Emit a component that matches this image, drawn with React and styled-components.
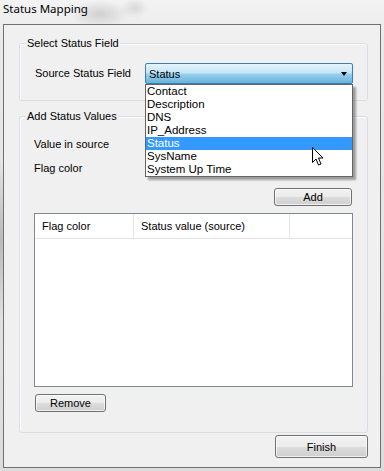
import React from "react";
import styled, { createGlobalStyle } from "styled-components";

const Global = createGlobalStyle`
  html, body { margin: 0; padding: 0; }
  body { background: #e6e6e6; font-family: "Liberation Sans", Arial, sans-serif; }
`;

const Frame = styled.div`
  position: relative;
  width: 384px;
  height: 471px;
  display: flex;
  flex-direction: column;
  box-sizing: border-box;
  background:
    radial-gradient(ellipse 30px 14px at 100px 14px, rgba(150,150,150,0.35), transparent),
    radial-gradient(ellipse 14px 10px at 135px 8px, rgba(160,160,160,0.3), transparent),
    radial-gradient(ellipse 8px 80px at 1px 240px, rgba(120,120,120,0.4), transparent),
    linear-gradient(to bottom, #f3f3f3, #e9e9e9 40px, #dcdcdc);
  overflow: hidden;
`;

const TitleBar = styled.div`
  height: 24px;
  flex: none;
  box-sizing: border-box;
  padding: 1px 0 0 3px;
  font-family: "Segoe UI", "Noto Sans", sans-serif;
  font-size: 11.5px;
  line-height: 16px;
  color: #000;
`;

const Client = styled.div`
  flex: 1;
  margin: 0 3px 3px 3px;
  border: 1px solid #707070;
  background: #f0f0f0;
  display: flex;
  flex-direction: column;
  padding: 18px 12px 0 15px;
  font-size: 11px;
  color: #000;
`;

const Group = styled.div`
  position: relative;
  height: ${(p) => p.$h}px;
  box-sizing: border-box;
  border: 1px solid #d5dfe5;
  border-radius: 3px;
  box-shadow: inset 1px 1px 0 #fff;
  margin-top: ${(p) => p.$mt || 0}px;
  padding: 19px 14px 0 14px;
  display: flex;
  flex-direction: column;
  flex: none;
`;

const Legend = styled.span`
  position: absolute;
  left: 6px;
  top: -8px;
  padding: 0 1px;
  background: #f0f0f0;
  line-height: 14px;
`;

const FieldRow = styled.div`
  display: flex;
  align-items: center;
  height: 21px;
`;

const FieldLabel = styled.span`
  width: 110px;
  padding-left: 1px;
  line-height: 13px;
`;

const Combo = styled.div`
  position: relative;
  width: 208px;
  height: 21px;
  box-sizing: border-box;
  border: 1px solid #3c7fb1;
  border-radius: 2px;
  background: linear-gradient(to bottom, #e5f4fc 0%, #c4e5f6 48%, #98d1ef 52%, #68b3db 100%);
  display: flex;
  align-items: center;
  justify-content: space-between;
  padding: 0 4px 0 3px;
`;

const Arrow = styled.span`
  width: 0;
  height: 0;
  border-left: 3.5px solid transparent;
  border-right: 3.5px solid transparent;
  border-top: 4px solid #000;
  margin-right: 1px;
`;

const DropList = styled.ul`
  position: absolute;
  left: -1px;
  top: 20px;
  width: 208px;
  margin: 0;
  padding: 0;
  list-style: none;
  box-sizing: border-box;
  border: 1px solid #646464;
  background: #fff;
  box-shadow: 3px 3px 2px rgba(0, 0, 0, 0.35);
  z-index: 5;
`;

const DropItem = styled.li`
  height: 13px;
  line-height: 13px;
  padding-left: 1px;
  font-size: 11.5px;
  background: ${(p) => (p.$sel ? "#3399ff" : "transparent")};
  color: ${(p) => (p.$sel ? "#fff" : "#000")};
`;

const TextRow = styled.div`
  height: 13px;
  line-height: 13px;
  margin-top: ${(p) => p.$mt || 0}px;
`;

const Button = styled.button`
  font-family: "Liberation Sans", Arial, sans-serif;
  font-size: 11px;
  color: #000;
  width: ${(p) => p.$w}px;
  height: ${(p) => p.$h}px;
  box-sizing: border-box;
  border: 1px solid #707070;
  border-radius: 3px;
  padding: 0;
  background: linear-gradient(to bottom, #f2f2f2 0%, #ebebeb 50%, #dddddd 50%, #cfcfcf 100%);
  box-shadow: inset 0 0 0 1px rgba(255,255,255,0.7);
  align-self: ${(p) => p.$align || "flex-start"};
  margin: ${(p) => p.$m || "0"};
  flex: none;
`;

const ListView = styled.div`
  width: 319px;
  height: 174px;
  box-sizing: border-box;
  border: 1px solid #828790;
  background: #fff;
  margin-top: 7px;
  flex: none;
`;

const Header = styled.div`
  display: grid;
  grid-template-columns: 99px 156px 1fr;
  height: 24px;
  border-bottom: 1px solid #e5e5e5;
`;

const HeaderCell = styled.div`
  display: flex;
  align-items: center;
  padding-left: 7px;
  border-right: ${(p) => (p.$last ? "none" : "1px solid #e5e5e5")};
  line-height: 13px;
`;

const Cursor = styled.svg`
  position: absolute;
  left: 311px;
  top: 146px;
  z-index: 10;
`;

const items = ["Contact", "Description", "DNS", "IP_Address", "Status", "SysName", "System Up Time"];

export default function App() {
  return (
    <Frame>
      <Global />
      <TitleBar>Status Mapping</TitleBar>
      <Client>
        <Group $h={58}>
          <Legend>Select Status Field</Legend>
          <FieldRow>
            <FieldLabel>Source Status Field</FieldLabel>
            <Combo>
              <span>Status</span>
              <Arrow />
              <DropList>
                {items.map((it) => (
                  <DropItem key={it} $sel={it === "Status"}>
                    {it}
                  </DropItem>
                ))}
              </DropList>
            </Combo>
          </FieldRow>
        </Group>
        <Group $h={317} $mt={15}>
          <Legend>Add Status Values</Legend>
          <TextRow $mt={2}>Value in source</TextRow>
          <TextRow $mt={11}>Flag color</TextRow>
          <Button $w={78} $h={18} $align="flex-end" $m="13px 1px 0 0">Add</Button>
          <ListView>
            <Header>
              <HeaderCell>Flag color</HeaderCell>
              <HeaderCell>Status value (source)</HeaderCell>
              <HeaderCell $last />
            </Header>
          </ListView>
          <Button $w={71} $h={18} $m="7px 0 0 1px">Remove</Button>
        </Group>
        <Button $w={93} $h={23} $align="flex-end" $m="2px 0 0 0">Finish</Button>
      </Client>
      <Cursor width="14" height="21" viewBox="0 0 14 21">
        <path d="M1.5 1.5 L1.5 16.5 L5 13 L7.5 19 L10 18 L7.5 12 L12 12 Z" fill="#fff" stroke="#000" strokeWidth="1" strokeLinejoin="miter" />
      </Cursor>
    </Frame>
  );
}
